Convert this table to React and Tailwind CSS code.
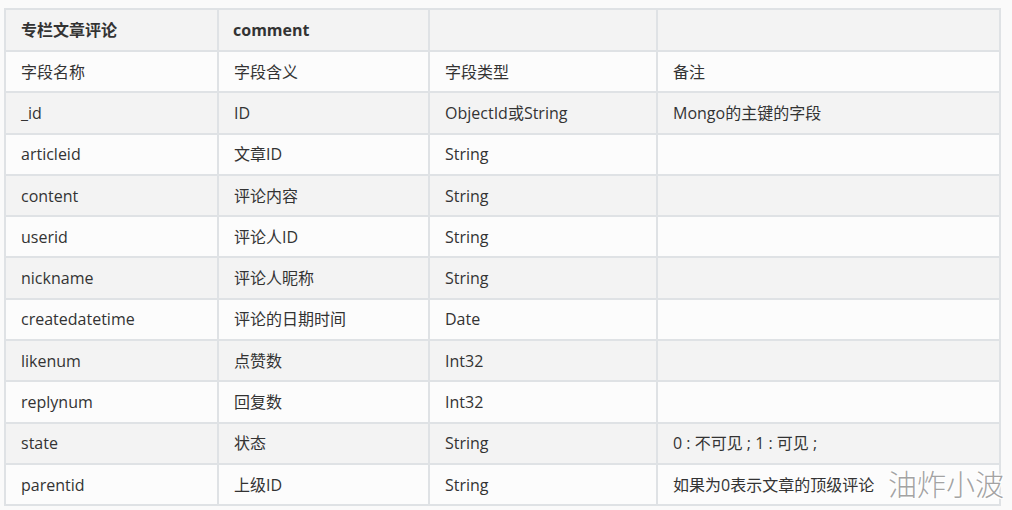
const rows = [
  ["字段名称", "字段含义", "字段类型", "备注"],
  ["_id", "ID", "ObjectId或String", "Mongo的主键的字段"],
  ["articleid", "文章ID", "String", ""],
  ["content", "评论内容", "String", ""],
  ["userid", "评论人ID", "String", ""],
  ["nickname", "评论人昵称", "String", ""],
  ["createdatetime", "评论的日期时间", "Date", ""],
  ["likenum", "点赞数", "Int32", ""],
  ["replynum", "回复数", "Int32", ""],
  ["state", "状态", "String", "0 : 不可见 ; 1 : 可见 ;"],
  ["parentid", "上级ID", "String", "如果为0表示文章的顶级评论"],
];

const App = () => {
  return (
    <div
      className="relative w-[1012px] h-[510px] bg-[#fafafa] pt-[8px] pl-[4px] text-[#333] overflow-hidden"
      style={{ fontFamily: '"Open Sans", "Noto Sans CJK SC", sans-serif' }}
    >
      <table className="table-fixed border-collapse w-[997px] text-[16px]">
        <colgroup>
          <col className="w-[213px]" />
          <col className="w-[211px]" />
          <col className="w-[228px]" />
          <col />
        </colgroup>
        <tbody>
          <tr className="bg-[#f3f3f3] font-bold">
            <td className="border-2 border-[#dfe2e5] h-[42px] px-[15px]">专栏文章评论</td>
            <td className="border-2 border-[#dfe2e5] px-[14px]">comment</td>
            <td className="border-2 border-[#dfe2e5] px-[15px]"></td>
            <td className="border-2 border-[#dfe2e5] px-[15px]"></td>
          </tr>
          {rows.map((r, i) => (
            <tr key={i} className={i % 2 === 0 ? "bg-[#fcfcfc]" : "bg-[#f3f3f3]"}>
              {r.map((c, j) => (
                <td key={j} className="border-2 border-[#dfe2e5] h-[41.3px] px-[15px] whitespace-nowrap">
                  {c}
                </td>
              ))}
            </tr>
          ))}
        </tbody>
      </table>
      <div
        className="absolute left-[888px] top-[469px] text-[29px] leading-none text-[#a3a3a3] whitespace-nowrap"
        style={{
          fontFamily: '"Noto Sans CJK SC", sans-serif',
          fontWeight: 300,
          textShadow: "1px 1px 0 #fff, -1px -1px 0 #fff, 1px -1px 0 #fff, -1px 1px 0 #fff",
        }}
      >
        油炸小波
      </div>
    </div>
  );
};

export default App;
